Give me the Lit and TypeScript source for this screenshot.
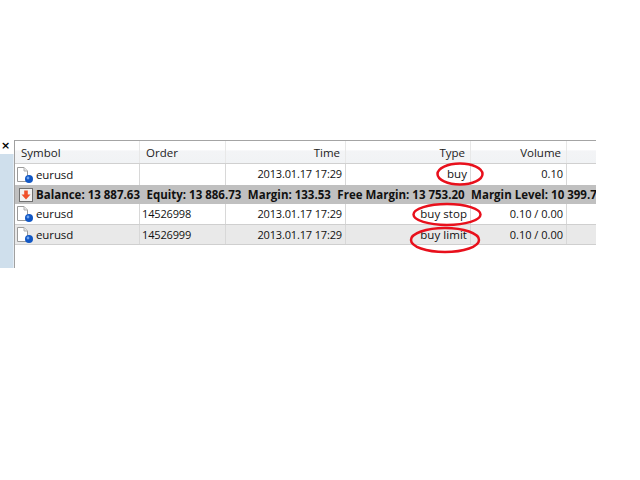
import { LitElement, html, css, svg } from "lit";
import { customElement } from "lit/decorators.js";

const docIcon = html`<svg class="ico" width="18" height="18" viewBox="0 0 18 18">
  <path d="M1.5 1.5H8L11.5 5V15.5H1.5Z" fill="#fff" stroke="#9a9a9a"/>
  <path d="M8 1.5V5H11.5" fill="#e8e8e8" stroke="#b0b0b0"/>
  <circle cx="13" cy="13" r="4" fill="#1257c4"/>
  <circle cx="12" cy="12" r="1.4" fill="#6fa4ee"/>
</svg>`;

const rows = [
  { order: "", type: "buy", vol: "0.10", cls: "first" },
  { bal: true },
  { order: "14526998", type: "buy stop", vol: "0.10 / 0.00", cls: "third" },
  { order: "14526999", type: "buy limit", vol: "0.10 / 0.00", cls: "alt" },
] as any[];

@customElement("app-root")
export class AppRoot extends LitElement {
  static styles = css`
    :host { display: block; width: 640px; height: 480px; background: #fff; overflow: hidden; font-family: "Open Sans", "Noto Sans", sans-serif; }
    .page { display: flex; padding-top: 140px; width: 596px; height: 128px; }
    .side { width: 14px; flex: none; display: flex; flex-direction: column; }
    .close { height: 14px; box-sizing: border-box; padding: 0 3px 3px 0; background: #fff; font: bold 11px/10px "DejaVu Sans", sans-serif; color: #000; display: flex; align-items: center; justify-content: center; }
    .blue { flex: 1; background: #cfdfec; border-right: 1px solid #e4edf5; }
    .panel { flex: 1; min-width: 0; border-left: 1px solid #a0a0a0; border-top: 1px solid #a4a4a4; overflow: hidden; position: relative; }
    .row { display: grid; grid-template-columns: 125px 86px 120px 125px 96px 1fr; height: 20px; box-sizing: border-box; border-bottom: 1px solid #cfcfcf; font-size: 11px; letter-spacing: -0.15px; line-height: 19px; color: #111; }
    .row.head { height: 23px; font-size: 11.5px; letter-spacing: 0; background: linear-gradient(#fff 0, #fff 40%, #f3f4f6 45%, #f1f3f5 100%); border-bottom: 1px solid #d0d0d0; line-height: 24px; color: #222; }
    .head .c { border-right: 1px solid #e8e8e8; padding: 0 5px; }
    .c { padding: 0 3px; white-space: nowrap; border-right: 1px solid #d8d8d8; overflow: hidden; }
    .head .c:last-child, .c:last-child { border-right: none; }
    .r { text-align: right; }
    .sym { display: flex; align-items: center; gap: 2px; padding-left: 1px; font-size: 11.5px; letter-spacing: -0.1px; }
    .head .h1 { padding-left: 6px; }
    .ord { padding-left: 2px; }
    .type { font-size: 11.5px; letter-spacing: 0.05px; }
    .vol { letter-spacing: 0; }
    .row.alt { background: #e9e9e9; }
    .row.first { height: 21px; border-bottom: none; }
    .row.third { height: 21px; line-height: 20px; }
    .bal { height: 19px; background: #c0c0c0; display: flex; align-items: center; gap: 3px; padding-left: 4px; font-weight: 700; font-size: 11.5px; white-space: nowrap; color: #111; overflow: hidden; }
    .bal svg, .bal span { flex: none; }
    .bal span { margin-right: 3.5px; }
    .marks { position: absolute; left: 0; top: 0; pointer-events: none; }
  `;

  render() {
    return html`<div class="page">
      <div class="side"><div class="close">×</div><div class="blue"></div></div>
      <div class="panel">
        <div class="row head">
          <div class="c h1">Symbol</div><div class="c h1">Order</div><div class="c r">Time</div><div class="c r">Type</div><div class="c r">Volume</div><div class="c"></div>
        </div>
        ${rows.map((r) =>
          r.bal
            ? html`<div class="bal">
                <svg width="14" height="14" viewBox="0 0 14 14">
                  <rect x="0.5" y="0.5" width="13" height="13" fill="#f2f2f2" stroke="#707070"/>
                  <path d="M5.2 2.5H8.8V6.5H11.5L7 11.5L2.5 6.5H5.2Z" fill="#f0502a"/>
                </svg>
                <span>Balance: 13 887.63</span><span>Equity: 13 886.73</span><span>Margin: 133.53</span><span>Free Margin: 13 753.20</span><span>Margin Level: 10 399.75%</span>
              </div>`
            : html`<div class="row ${r.cls}">
                <div class="c sym">${docIcon}eurusd</div>
                <div class="c ord">${r.order}</div>
                <div class="c r">2013.01.17 17:29</div>
                <div class="c r type">${r.type}</div>
                <div class="c r vol">${r.vol}</div>
                <div class="c"></div>
              </div>`
        )}
      </div>
    </div>
    <svg class="marks" width="640" height="480" fill="none" stroke="#e8101c" stroke-width="2.5">
      ${svg`<ellipse cx="460" cy="174" rx="22.5" ry="10.5"/>
      <ellipse cx="447" cy="214.5" rx="33.5" ry="10.5"/>
      <ellipse cx="445" cy="240" rx="34" ry="12"/>`}
    </svg>`;
  }
}
